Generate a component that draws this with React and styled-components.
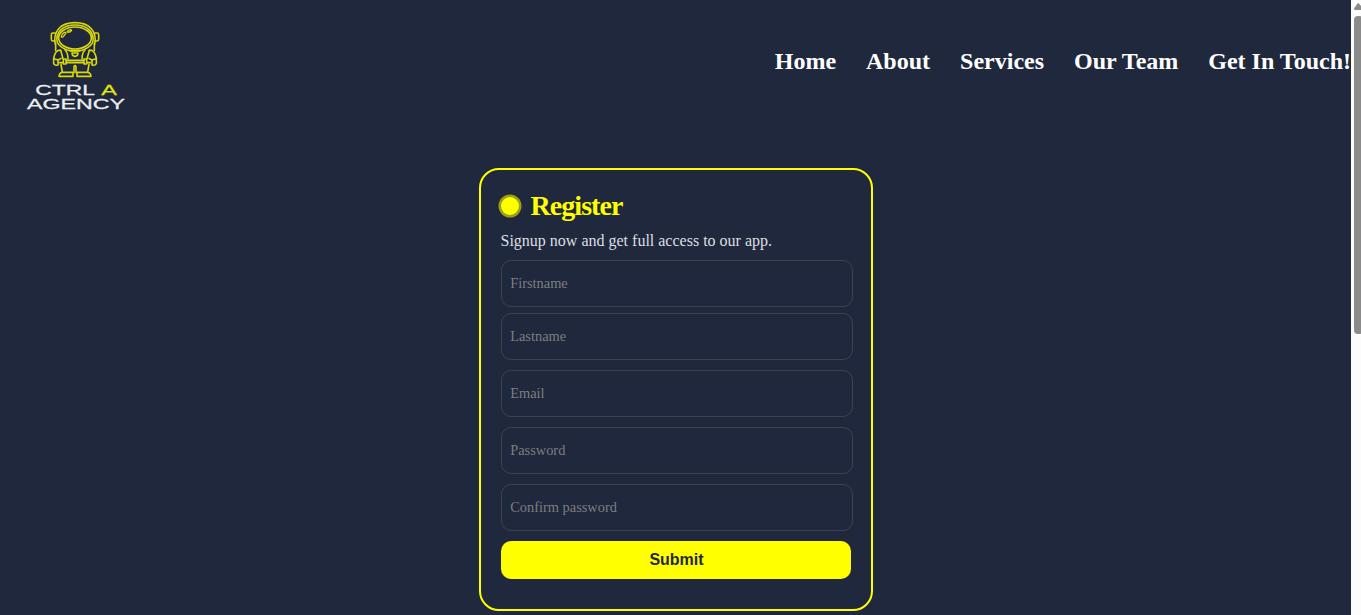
import React from "react";
import styled, { createGlobalStyle } from "styled-components";

const GlobalStyle = createGlobalStyle`
  * { box-sizing: border-box; }
  html, body { margin: 0; padding: 0; height: 615px; overflow: hidden; background: #1f283c; }
  body { font-family: "Liberation Serif", "Times New Roman", serif; }
`;

const Page = styled.div`
  display: flex;
  width: 1361px;
  height: 615px;
  background: #1f283c;
`;

const Content = styled.div`
  flex: 1;
  min-width: 0;
  display: flex;
  flex-direction: column;
  align-items: center;
`;

const Header = styled.header`
  width: 100%;
  height: 122px;
  padding-left: 15px;
  display: flex;
  align-items: center;
  justify-content: space-between;
  flex-shrink: 0;
`;

const LogoImage = styled.svg`
  display: block;
  width: 120px;
  height: 110px;
  margin-top: 8px;
`;

const Nav = styled.nav`
  display: flex;
  gap: 30px;
`;

const NavLink = styled.a`
  color: #fff;
  font-size: 24px;
  line-height: 28px;
  font-weight: 700;
  white-space: nowrap;
`;

const Form = styled.form`
  width: 394px;
  height: 443px;
  margin-top: 46px;
  padding: 20px;
  border: 2px solid #ff0;
  border-radius: 20px;
  display: flex;
  flex-direction: column;
  flex-shrink: 0;
`;

const Title = styled.h1`
  margin: 0;
  height: 32px;
  display: flex;
  align-items: center;
  gap: 12px;
  color: #ff0;
  font-size: 28px;
  line-height: 32px;
  letter-spacing: -0.95px;
`;

const Dot = styled.span`
  width: 18px;
  height: 18px;
  border-radius: 50%;
  background: #ff0;
  box-shadow: 0 0 0 2.5px rgba(255, 255, 0, 0.55);
`;

const Message = styled.p`
  margin: 10px 0;
  height: 18px;
  line-height: 18px;
  font-size: 16px;
  white-space: nowrap;
  color: #dddfe2;
`;

const Names = styled.div`
  display: flex;
  flex-direction: column;
  gap: 6px;
`;

const Fields = styled.div`
  display: flex;
  flex-direction: column;
  gap: 10px;
`;

const Input = styled.input`
  width: 352px;
  height: 47px;
  padding: 0 8px 0 8.7px;
  border: 1px solid rgba(105, 105, 105, 0.4);
  border-radius: 10px;
  background: transparent;
  color: #fff;
  outline: 0;
  font-family: inherit;
  font-size: 14.4px;
  &::placeholder { color: #7d7e80; opacity: 1; }
`;

const Submit = styled.button`
  width: 350px;
  height: 38px;
  padding: 0 0 0 2px;
  border: 0;
  border-radius: 10px;
  background: #ff0;
  color: #1f283c;
  font: 700 16px "Liberation Sans", Arial, sans-serif;
`;

const ScrollTrack = styled.div`
  width: 10px;
  height: 615px;
  padding: 7px 0 0 3px;
  background: #fcfcfc;
  overflow: hidden;
  display: flex;
  flex-direction: column;
  gap: 6px;
`;

const ScrollArrow = styled.svg`
  display: block;
  width: 10px;
  height: 7px;
  margin-top: -4px;
  flex-shrink: 0;
`;

const ScrollThumb = styled.div`
  width: 9px;
  height: 318px;
  border-radius: 4px;
  background: #8b8b8b;
`;

function Logo() {
  return (
    <LogoImage viewBox="0 0 360 330" role="img" aria-label="CTRL A Agency">
      <g fill="none" stroke="#d8d80f" strokeWidth="4.8" strokeLinejoin="round" strokeLinecap="round">
        <ellipse cx="180" cy="84" rx="49" ry="33" />
        <path d="M121 103C113 65 136 38 180 38S247 65 239 103" />
        <path d="M127 98C120 68 142 45 180 45s60 23 53 53M127 98c8 13 23 21 38 24h30c15-3 30-11 38-24" />
        <path d="M120 69h-7q-4 0-4 5v14q0 5 4 5h7M240 69h7q4 0 4 5v14q0 5-4 5h-7" />
        <path d="M139 80q1-9 9-13 6-1 4 4l-7 9q-5 4-6 0zM156 65q5-6 12-6 4 2-1 5-7 5-11 1z" strokeWidth="4" />
        <path d="M122 101v21M238 101v21" />
        <path d="M137 121h-8q-10 6-13 25v15q4 7 13 4v-15M223 121h8q10 6 13 25v15q-4 7-13 4v-15" />
        <path d="M116 146l14 4 8-5M244 146l-14 4-8-5" />
        <path d="M137 121l7 25M223 121l-7 25M150 120q9 8 9 27M210 120q-9 8-9 27" />
        <path d="M166 123h28M171 129q0 10 9 10t9-10z" />
        <path d="M145 147h8v15h-8zM207 147h8v15h-8zM153 151h54M153 158h54M133 158h12M215 158h12" />
        <path d="M138 163l4 23M222 163l-4 23M177 188v-18q3-6 6 0v18" />
        <path d="M142 187h32v12h-42q1-10 10-12zM218 187h-32v12h42q-1-10-10-12z" />
      </g>
      <g fontFamily="Liberation Sans, Arial, sans-serif" fontSize="46" fill="#eceef0" stroke="#eceef0" strokeWidth="0.8">
        <text x="61" y="254" textLength="179" lengthAdjust="spacingAndGlyphs">CTRL</text>
        <text x="259" y="254" textLength="47" lengthAdjust="spacingAndGlyphs" fill="#e5e510" stroke="#e5e510">A</text>
        <text x="36" y="297" textLength="294" lengthAdjust="spacingAndGlyphs">AGENCY</text>
      </g>
    </LogoImage>
  );
}

const links = ["Home", "About", "Services", "Our Team", "Get In Touch!"];

export default function App() {
  return (
    <>
      <GlobalStyle />
      <Page>
        <Content>
          <Header>
            <Logo />
            <Nav>
              {links.map((label) => <NavLink key={label}>{label}</NavLink>)}
            </Nav>
          </Header>
          <Form>
            <Title><Dot />Register</Title>
            <Message>Signup now and get full access to our app.</Message>
            <Fields>
              <Names>
                <Input placeholder="Firstname" />
                <Input placeholder="Lastname" />
              </Names>
              <Input placeholder="Email" />
              <Input type="password" placeholder="Password" />
              <Input type="password" placeholder="Confirm password" />
              <Submit type="button">Submit</Submit>
            </Fields>
          </Form>
        </Content>
        <ScrollTrack>
          <ScrollArrow viewBox="0 0 10 7"><path d="M4.5 0L9 5.5Q9 7 8 7H1Q0 7 0 5.5L3.5 .5Q4 0 4.5 0Z" fill="#8b8b8b" /></ScrollArrow>
          <ScrollThumb />
        </ScrollTrack>
      </Page>
    </>
  );
}
